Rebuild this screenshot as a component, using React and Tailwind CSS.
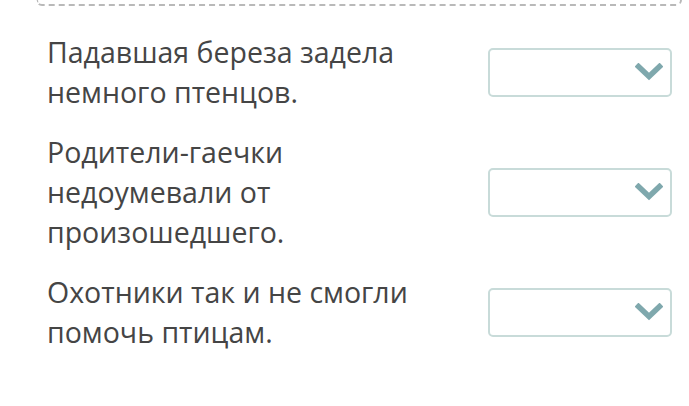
const items = [
  ["Падавшая береза задела", "немного птенцов."],
  ["Родители-гаечки", "недоумевали от", "произошедшего."],
  ["Охотники так и не смогли", "помочь птицам."],
];

const Chevron = () => (
  <svg width="28" height="18" viewBox="0 0 28 18" className="shrink-0">
    <path d="M3.5 3.5 L14 13.5 L24.5 3.5" fill="none" stroke="#7fa8ad" strokeWidth="5.5" strokeLinecap="square" strokeLinejoin="miter" />
  </svg>
);

const App = () => {
  return (
    <div className="h-[406px] w-[689px] overflow-hidden bg-white" style={{ fontFamily: '"Open Sans", sans-serif' }}>
      <div className="ml-[36px] mr-[7px] h-[6px] rounded-b-[8px] border-x-2 border-b-2 border-dashed border-[#b9b9b9]" />
      <div className="flex flex-col gap-5 pl-[47px] pr-[17px] pt-[26px]">
        {items.map((lines, i) => (
          <div key={i} className="flex items-center justify-between">
            <p className="text-[28.5px] leading-[40px] text-[#454545]">
              {lines.map((line) => (
                <span key={line} className="block">
                  {line}
                </span>
              ))}
            </p>
            <div className="flex h-[49px] w-[184px] items-center justify-end rounded-[5px] border-2 border-[#c8dbd9] pr-[7px]">
              <Chevron />
            </div>
          </div>
        ))}
      </div>
    </div>
  );
};

export default App;
